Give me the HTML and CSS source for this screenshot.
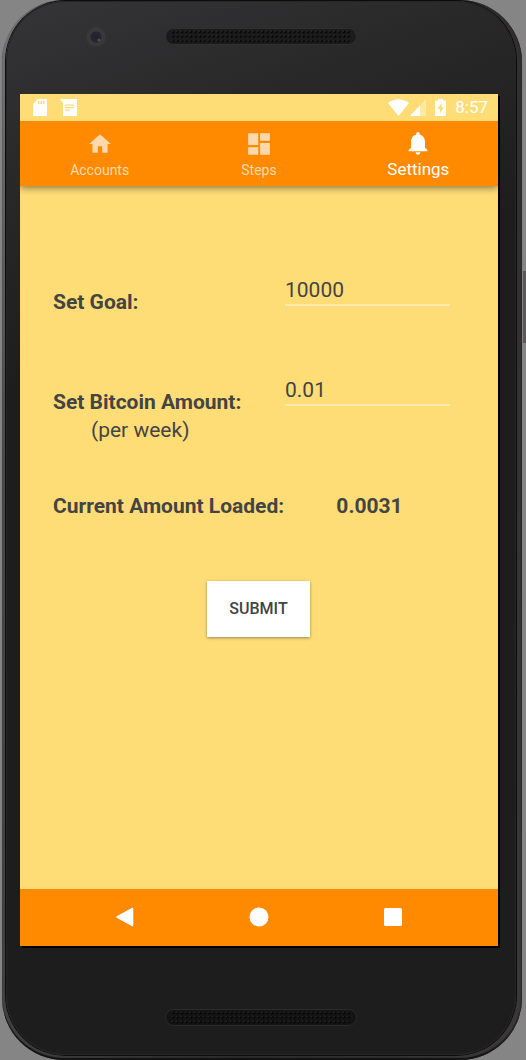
FILE: index.html
```html
<!DOCTYPE html>
<html lang="en">
<head>
<meta charset="utf-8">
<meta name="viewport" content="width=device-width, initial-scale=1">
<title>Settings</title>
<link rel="stylesheet" href="styles.css">
</head>
<body>
<div class="phone">
  <span class="side-button"></span>
  <div class="face">
    <div class="bezel bezel-top">
      <span class="camera"></span>
      <svg class="speaker" viewBox="0 0 192 17" aria-hidden="true">
        <defs>
          <pattern id="holes" x="6" y="2" width="4.5" height="4.5" patternUnits="userSpaceOnUse">
            <circle cx="2" cy="2" r="1.3" fill="#050505"/>
            <circle cx="1.2" cy="1.2" r=".6" fill="#3a3a3a"/>
          </pattern>
        </defs>
        <rect x=".5" y=".5" width="191" height="16" rx="8" fill="#1b1b1b" stroke="#303030"/>
        <rect x="5" y="2" width="182" height="13" rx="5" fill="url(#holes)"/>
      </svg>
    </div>

    <div class="screen">
      <header class="status-bar">
        <div class="status-group notices">
          <svg viewBox="0 0 14 17" width="14" height="17" aria-hidden="true"><path fill="#fff" fill-rule="evenodd" d="M5 0h8q1 0 1 1v15q0 1-1 1H1q-1 0-1-1V5zM5 2v3h1.500V2zm2.500 0v3H9V2zM10 2v3h1.500V2z"/></svg>
          <svg viewBox="0 0 17 17" width="17" height="17" aria-hidden="true"><path fill="#fff" fill-rule="evenodd" d="M0 0h16q1 0 1 1v15q0 1-1 1H4q-1 0-1-1V4zM5 5.500v1.200h9V5.500zM5 8v1.200h9V8zm0 2.500v1.200h5v-1.200z"/></svg>
        </div>
        <div class="status-group signals">
          <svg viewBox="0 0 21 17" width="21" height="17" aria-hidden="true"><path fill="#fff" d="M0 4Q10.500-3.500 21 4L10.500 17z"/></svg>
          <svg viewBox="0 0 16 17" width="16" height="17" aria-hidden="true"><path fill="#fff" fill-opacity=".35" d="M16 0v17H0z"/><path fill="#fff" d="M10 6.400V17H0z"/></svg>
          <svg class="battery" viewBox="0 0 11 17" width="11" height="17" aria-hidden="true"><path fill="#fff" fill-rule="evenodd" d="M3 0h5v1.500h2q1 0 1 1V16q0 1-1 1H1q-1 0-1-1V2.500q0-1 1-1h2zM6.500 4L2.500 10H5v4.500L8.700 8.300H6.500z"/></svg>
          <time class="clock">8:57</time>
        </div>
      </header>

      <nav class="tabs">
        <a class="tab" href="#accounts">
          <svg class="tab-icon" viewBox="0 0 24 24" aria-hidden="true"><path d="M10 20v-6h4v6h5v-8h3L12 3 2 12h3v8z"/></svg>
          Accounts
        </a>
        <a class="tab" href="#steps">
          <svg class="tab-icon" viewBox="0 0 24 24" aria-hidden="true"><path d="M2 13h9.300V2H2zm0 9h9.300v-7H2zm11 0h9V11h-9zm0-20v7h9V2z"/></svg>
          Steps
        </a>
        <a class="tab tab-active" href="#settings" aria-current="page">
          <svg class="tab-icon" viewBox="0 0 24 24" aria-hidden="true"><path d="M12 22c1.100 0 2-.9 2-2h-4c0 1.100.9 2 2 2zm6-6v-5c0-3.070-1.640-5.640-4.500-6.320V4c0-.83-.67-1.500-1.500-1.500s-1.500.67-1.500 1.500v.68C7.630 5.360 6 7.920 6 11v5l-2 2v1h16v-1z"/></svg>
          Settings
        </a>
      </nav>

      <main class="content">
        <form class="form">
          <label class="label" for="goal">Set Goal:</label>
          <input class="field" id="goal" type="text" value="10000">
          <label class="label" for="amount">Set Bitcoin Amount:<span class="hint">(per week)</span></label>
          <input class="field" id="amount" type="text" value="0.01">
          <span class="total-label" id="loaded">Current Amount Loaded:</span>
          <output class="total" aria-labelledby="loaded">0.0031</output>
          <button class="submit" type="button">SUBMIT</button>
        </form>
      </main>

      <footer class="system-bar">
        <button class="system-button" type="button" aria-label="Back"><svg viewBox="0 0 20 20" width="20" height="20"><path fill="#fff" stroke="#fff" stroke-width="1.500" stroke-linejoin="round" d="M17.500 1.500v17L2 10z"/></svg></button>
        <button class="system-button" type="button" aria-label="Home"><svg viewBox="0 0 20 20" width="20" height="20"><circle cx="10" cy="10" r="9.500" fill="#fff"/></svg></button>
        <button class="system-button" type="button" aria-label="Overview"><svg viewBox="0 0 20 20" width="20" height="20"><rect x="1" y="1" width="18" height="18" rx="1.500" fill="#fff"/></svg></button>
      </footer>
    </div>

    <div class="bezel bezel-bottom">
      <svg class="speaker" viewBox="0 0 192 17" aria-hidden="true">
        <rect x=".5" y=".5" width="191" height="16" rx="8" fill="#141414" stroke="#2b2b2b"/>
        <rect x="5" y="2" width="182" height="13" rx="5" fill="url(#holes)"/>
      </svg>
    </div>
  </div>
</div>
</body>
</html>
```
FILE: styles.css
```css
* {
  box-sizing: border-box;
}

body {
  margin: 0;
  background: #858585;
  color: #444;
  font-family: Roboto, "Noto Sans", sans-serif;
}

.phone {
  position: relative;
  display: flex;
  min-height: 100vh;
  margin: 0 4px 0 2px;
  padding: 1px 6px 5px 4px;
  border-radius: 62px;
  background: linear-gradient(100deg, #777 0, #4a4a4a 12%, #2c2a2b 60%, #3a3839 100%);
  box-shadow: inset -1px 0 1px #2a2829, inset 0 -2px 1px #111;
}

.side-button {
  position: absolute;
  top: 271px;
  right: -4px;
  width: 3px;
  height: 72px;
  background: #5c595a;
}

.face {
  flex: 1;
  display: flex;
  flex-direction: column;
  padding: 0 18px 0 14px;
  border-radius: 60px;
  background: linear-gradient(160deg, #353537 0, #29292a 14%, #1d1d1d 32%, #1d1d1d 100%);
  box-shadow: 0 0 0 1px #0c0c0c, inset 0 0 0 1px #262626;
}

.bezel {
  display: flex;
  justify-content: center;
  align-items: flex-start;
  padding-left: 4px;
}

.bezel-top {
  position: relative;
  height: 93px;
  padding-top: 27px;
}

.bezel-bottom {
  height: 109px;
  padding-top: 63px;
}

.speaker {
  display: block;
  width: 192px;
  height: 17px;
}

.camera {
  position: absolute;
  top: 26px;
  left: 66px;
  width: 20px;
  height: 20px;
  border-radius: 50%;
  background: radial-gradient(circle at 13px 13px, #855a5c 0, transparent 2px), radial-gradient(circle at 50% 50%, #23222c 0, #252430 5px, #39393a 6px, #39393a 9px, #333 10px);
}

.screen {
  flex: 1;
  display: flex;
  flex-direction: column;
  background: #ffdd76;
  box-shadow: 2px 2px 0 #000;
}

.status-bar {
  display: flex;
  justify-content: space-between;
  align-items: center;
  height: 27px;
  padding: 0 10px 0 13px;
}

.status-group {
  display: flex;
  align-items: center;
}

.notices {
  gap: 13px;
}

.signals {
  gap: 1px;
}

.battery {
  margin: 0 8px;
}

.clock {
  color: #fff;
  font-size: 17px;
  font-weight: 400;
  line-height: 27px;
}

.tabs {
  display: grid;
  grid-template-columns: repeat(3, 1fr);
  height: 65px;
  background: #ff8a00;
  box-shadow: 0 2px 7px rgba(0, 0, 0, 0.45);
  clip-path: inset(0 0 -14px 0);
}

.tab {
  display: flex;
  flex-direction: column;
  align-items: center;
  gap: 1px;
  padding-top: 10px;
  color: #ffd9ad;
  font-size: 14px;
  line-height: 24px;
  text-decoration: none;
}

.tab-icon {
  width: 26px;
  height: 26px;
  fill: currentColor;
}

.tab-active {
  gap: 0;
  padding-top: 8px;
  color: #fff;
  font-size: 17px;
}

.tab-active .tab-icon {
  width: 28px;
  height: 28px;
}

.content {
  flex: 1;
  padding: 88px 48px 0 33px;
}

.form {
  display: grid;
  grid-template-columns: 1fr 165px;
  align-items: start;
  font-size: 21px;
  line-height: 28px;
}

.label {
  min-height: 100px;
  padding-top: 14px;
  font-weight: 700;
}

.hint {
  display: block;
  padding-left: 38px;
  font-weight: 400;
}

.field {
  width: 100%;
  height: 32px;
  padding: 1px 0 0;
  border: 0;
  border-bottom: 2px solid #ffeaad;
  background: none;
  color: #444;
  font: inherit;
  outline: 0;
}

.total-label,
.total {
  padding-top: 18px;
  font-weight: 700;
  white-space: nowrap;
}

.total {
  padding-left: 4px;
  text-align: center;
}

.submit {
  grid-column: 1 / -1;
  justify-self: center;
  height: 56px;
  margin: 61px 0 0 14px;
  padding: 0 22px;
  border: 0;
  background: #fff;
  box-shadow: 0 1px 3px rgba(0, 0, 0, 0.4);
  color: #444;
  font: 500 16px/24px Roboto, "Noto Sans", sans-serif;
}

.system-bar {
  display: flex;
  justify-content: center;
  align-items: center;
  gap: 86px;
  height: 57px;
  padding-bottom: 1px;
  background: #ff8a00;
}

.system-button {
  display: flex;
  justify-content: center;
  width: 48px;
  padding: 0;
  border: 0;
  background: none;
}
```
